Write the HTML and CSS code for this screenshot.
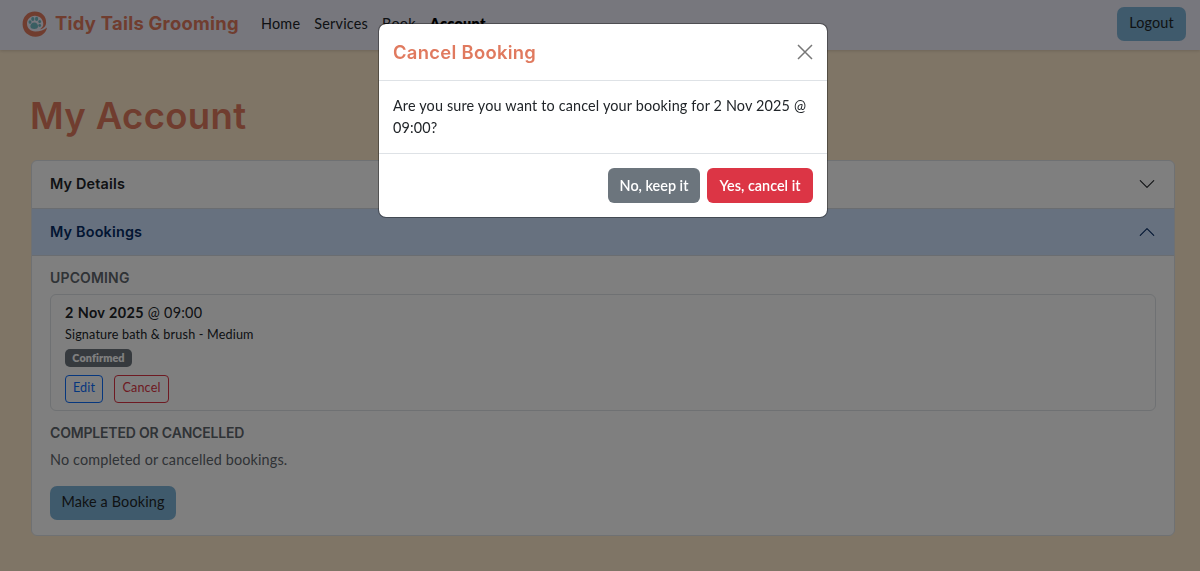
FILE: index.html
```html
<!DOCTYPE html>
<html lang="en">
<head>
<meta charset="utf-8">
<title>My Account - Tidy Tails Grooming</title>
<link rel="stylesheet" href="styles.css">
</head>
<body>
<header class="navbar">
  <a class="brand">
    <svg class="logo" viewBox="0 0 26 26">
      <path d="M.6 13.500C.4 6 5.700.6 12.700.6c6.800 0 11.800 4.600 11.400 11.200-.2 3.500-2.400 5.900-6 6.400 2.200-1.400 3.300-3.200 3.200-5.500C21.200 8.200 17.500 4.600 12.800 4.700 8.200 4.800 4.900 8.300 5 12.700c.2 4.700 3.600 7.600 8.100 7.700 4.700.1 8.700-1.200 11.900-3.900-1 5.500-5.500 9.400-11.600 9.200C6 25.400.8 20.600.6 13.500z" fill="#e07a5f"/>
      <g fill="#72bcc5"><path d="M12.300 11.500c2.300 0 3.800 2 3.700 4-.1 2.200-1.800 2.400-3.700 2.400s-3.800-.2-3.900-2.300c-.1-2 1.500-4.100 3.900-4.100z"/><ellipse cx="8" cy="11.100" rx="1.500" ry="1.800"/><ellipse cx="10.800" cy="8" rx="1.600" ry="2.100"/><ellipse cx="14.600" cy="7.900" rx="1.600" ry="2.100"/><ellipse cx="17.700" cy="10.600" rx="1.400" ry="1.700"/><circle cx="17.700" cy="14.500" r="1.400"/></g>
    </svg>
    <span class="brand-name">Tidy Tails Grooming</span>
  </a>
  <nav class="links">
    <a>Home</a><a>Services</a><a>Book</a><a class="active">Account</a>
  </nav>
  <button class="btn btn-blue logout">Logout</button>
</header>
<main class="page">
  <h1>My Account</h1>
  <section class="accordion">
    <h2 class="acc-head"><span>My Details</span><svg class="chevron" viewBox="0 0 16 16"><path d="m2 5 6 6 6-6"/></svg></h2>
    <h2 class="acc-head open"><span>My Bookings</span><svg class="chevron" viewBox="0 0 16 16"><path d="m2 11 6-6 6 6"/></svg></h2>
    <div class="acc-body">
      <h3 class="upcoming">UPCOMING</h3>
      <article class="booking">
        <div class="when"><strong>2 Nov 2025</strong> @ 09:00</div>
        <div class="service">Signature bath &amp; brush - Medium</div>
        <span class="badge">Confirmed</span>
        <div class="actions"><button class="small edit">Edit</button><button class="small cancel">Cancel</button></div>
      </article>
      <h3 class="past">COMPLETED OR CANCELLED</h3>
      <p class="empty">No completed or cancelled bookings.</p>
      <button class="btn btn-blue make">Make a Booking</button>
    </div>
  </section>
</main>
<div class="backdrop">
  <div class="modal" role="dialog">
    <div class="modal-head"><h4>Cancel Booking</h4><svg class="close" viewBox="0 0 16 16"><path d="m1 1 14 14M15 1 1 15"/></svg></div>
    <p class="modal-body">Are you sure you want to cancel your booking for 2 Nov 2025 @<br>09:00?</p>
    <div class="modal-foot"><button class="btn keep">No, keep it</button><button class="btn confirm">Yes, cancel it</button></div>
  </div>
</div>
</body>
</html>
```
FILE: styles.css
```css
* { box-sizing: border-box; }
body { margin: 0; height: 571px; overflow: hidden; background: #ffebcd; color: #212529; font: 14.4px/21.6px Lato, sans-serif; }
h1, h2, h3, h4, p { margin: 0; font-family: Inter, sans-serif; font-weight: 600; }
button { font: inherit; white-space: nowrap; }
.navbar { display: flex; align-items: center; height: 50px; padding: 0 14px 3px 22px; background: #eeeefb; box-shadow: 0 1px 3px rgba(0,0,0,.15); }
.brand { display: flex; align-items: center; width: 232px; gap: 7px; }
.logo { width: 26px; height: 26px; }
.brand-name { font: 700 18.4px/27px Inter, sans-serif; letter-spacing: .26px; color: #e07a5f; white-space: nowrap; }
.links { display: flex; gap: 14px; padding-left: 7px; flex: 1; letter-spacing: .22px; }
.links .active { color: #000; font-weight: 800; letter-spacing: .3px; }
.btn { height: 35px; padding: 0 11px; border: 0; border-radius: 6px; color: #fff; }
.btn-blue { height: 34px; padding-bottom: 1px; background: #7fb5d8; color: #212529; border-radius: 7px; letter-spacing: .15px; }
.logout { width: 69px; }
.page { padding: 45px 25px 0 31px; }
h1 { font-size: 36.5px; line-height: 43px; letter-spacing: .35px; margin: 0 0 22px -1px; color: #e07a5f; }
.accordion { height: 376px; border: 1px solid #dee2e6; border-radius: 6px; background: #fff; overflow: hidden; }
.acc-head { display: flex; justify-content: space-between; align-items: center; height: 47px; padding: 0 18px 1px; font-size: 14.4px; letter-spacing: .18px; }
.acc-head.open { height: 48px; padding-bottom: 0; background: #cfe2ff; color: #052c65; border-top: 1px solid #d5dbe3; border-bottom: 1px solid #d5dbe3; }
.chevron { width: 18px; height: 18px; fill: none; stroke: currentColor; stroke-width: 1; stroke-linecap: round; stroke-linejoin: round; }
.acc-body { padding: 13px 18px; }
h3 { font-size: 14px; line-height: 17px; color: #5f666d; }
.upcoming { letter-spacing: .15px; }
.past { letter-spacing: -.18px; }
.booking { height: 117px; margin: 8px 0 13px; padding: 7px 14px; border: 1px solid #dee2e6; border-radius: 6px; }
.when { letter-spacing: .25px; }
.when strong { letter-spacing: .4px; }
.service { font-size: 12.6px; line-height: 22px; letter-spacing: .17px; }
.badge { display: block; width: 67px; height: 18px; margin-top: 3px; border-radius: 5px; background: #6c757d; color: #fff; text-align: center; font-size: 10.8px; line-height: 17px; font-weight: 800; letter-spacing: .1px; }
.actions { display: flex; gap: 11px; margin-top: 8px; }
.small { height: 28px; padding: 0 0 1px; border: 1px solid; border-radius: 4px; background: none; font-size: 12.6px; letter-spacing: .15px; }
.edit { width: 38px; color: #0d6efd; }
.cancel { width: 55px; color: #dc3545; }
.empty { margin: 8px 0 15px; font: inherit; letter-spacing: .14px; color: #5f666d; }
.make { width: 126px; }
.backdrop { position: fixed; inset: 0; padding: 23px 0 0 378px; background: rgba(0,0,0,.5); }
.modal { width: 450px; height: 195px; border: 1px solid rgba(0,0,0,.35); background: #fff; background-clip: padding-box; border-radius: 8px; }
.modal-head { display: flex; justify-content: space-between; align-items: center; height: 57px; padding: 0 14px; border-bottom: 1px solid #dee2e6; }
h4 { font-size: 18.4px; padding-top: 2px; letter-spacing: .3px; color: #e07a5f; }
.close { width: 16px; height: 16px; stroke: #777; stroke-width: 1.5; }
.modal-body { height: 72px; padding: 14px; font: inherit; letter-spacing: .16px; white-space: nowrap; }
.modal-foot { display: flex; justify-content: flex-end; gap: 7px; padding: 14px 14px 0; border-top: 1px solid #dee2e6; }
.keep { width: 92px; background: #6c757d; }
.confirm { width: 106px; background: #dc3545; }
.modal-foot .btn { font-weight: 600; }
```
